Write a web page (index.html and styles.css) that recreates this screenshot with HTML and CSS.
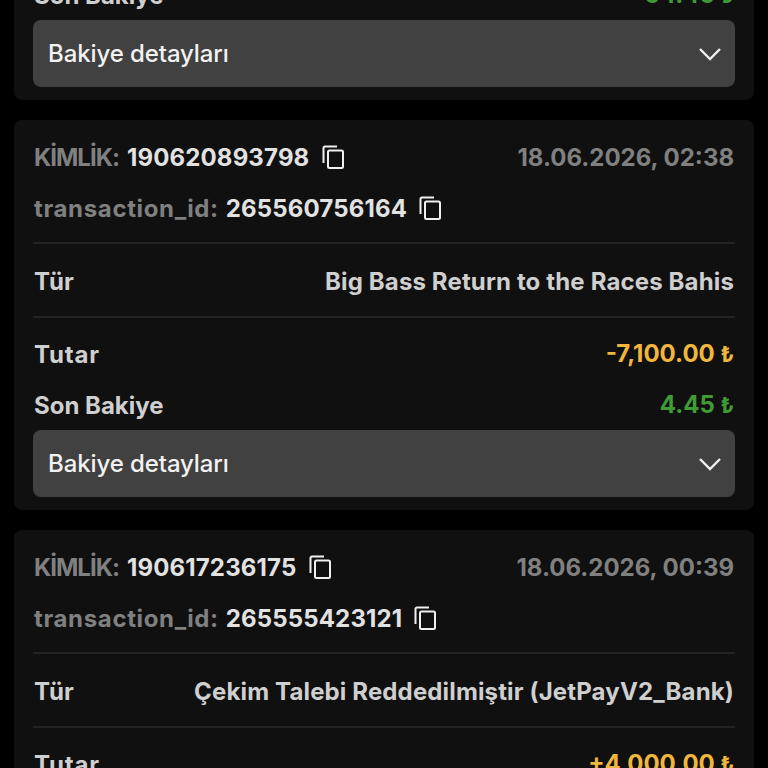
FILE: index.html
```html
<!DOCTYPE html>
<html lang="tr">
<head>
<meta charset="utf-8">
<title>İşlemler</title>
<link rel="stylesheet" href="styles.css">
</head>
<body>
<main class="list">
  <section class="card card-first">
    <div class="row balance"><span class="label">Son Bakiye</span><span class="green">54.45 <span class="cur">₺</span></span></div>
    <div class="select"><span>Bakiye detayları</span><svg class="chev" viewBox="0 0 24 14"><path d="M2 2l10 10L22 2"/></svg></div>
  </section>
  <section class="card">
    <div class="head"><div class="id"><span class="muted kimlik">KİMLİK:</span><b>190620893798</b><svg class="copy" viewBox="0 0 22 24"><path d="M15 1.5H3A1.5 1.5 0 0 0 1.5 3v15"/><rect x="6" y="5.5" width="15" height="17.5" rx="1.5"/></svg></div><span class="muted">18.06.2026, 02:38</span></div>
    <div class="id id2"><span class="muted txid">transaction_id:</span><b>265560756164</b><svg class="copy" viewBox="0 0 22 24"><path d="M15 1.5H3A1.5 1.5 0 0 0 1.5 3v15"/><rect x="6" y="5.5" width="15" height="17.5" rx="1.5"/></svg></div>
    <div class="row type"><span class="label wide">Tür</span><span class="label wide">Big Bass Return to the Races Bahis</span></div>
    <div class="row amount"><span class="label tutar">Tutar</span><span class="yellow">-7,100.00 <span class="cur">₺</span></span></div>
    <div class="row balance"><span class="label">Son Bakiye</span><span class="green">4.45 <span class="cur">₺</span></span></div>
    <div class="select"><span>Bakiye detayları</span><svg class="chev" viewBox="0 0 24 14"><path d="M2 2l10 10L22 2"/></svg></div>
  </section>
  <section class="card">
    <div class="head"><div class="id"><span class="muted kimlik">KİMLİK:</span><b>190617236175</b><svg class="copy" viewBox="0 0 22 24"><path d="M15 1.5H3A1.5 1.5 0 0 0 1.5 3v15"/><rect x="6" y="5.5" width="15" height="17.5" rx="1.5"/></svg></div><span class="muted">18.06.2026, 00:39</span></div>
    <div class="id id2"><span class="muted txid">transaction_id:</span><b>265555423121</b><svg class="copy" viewBox="0 0 22 24"><path d="M15 1.5H3A1.5 1.5 0 0 0 1.5 3v15"/><rect x="6" y="5.5" width="15" height="17.5" rx="1.5"/></svg></div>
    <div class="row type"><span class="label wide">Tür</span><span class="label wide">Çekim Talebi Reddedilmiştir (JetPayV2_Bank)</span></div>
    <div class="row amount"><span class="label tutar">Tutar</span><span class="yellow">+4,000.00 <span class="cur">₺</span></span></div>
  </section>
</main>
</body>
</html>
```
FILE: styles.css
```css
html, body {
  margin: 0;
  height: 768px;
  overflow: hidden;
  background: #000;
}
body {
  font-family: Inter, "Noto Sans", sans-serif;
  font-weight: 700;
  font-size: 24px;
  line-height: 30px;
  color: #d8d8d8;
}
.list {
  display: flex;
  flex-direction: column;
  gap: 20px;
  margin: -20px 14px 0;
}
.card {
  background: #101010;
  border-radius: 8px;
  padding: 23px 19px 13px;
}
.card-first { padding-top: 0; }
.head, .row, .id, .select {
  display: flex;
  align-items: center;
}
.head, .row, .select { justify-content: space-between; }
.head { padding: 0 1px; }
.id { gap: 8px; white-space: nowrap; }
.id2 { gap: 7px; margin-top: 21px; padding: 0 0 18px 1px; border-bottom: 2px solid #222; }
.muted { color: #808080; }
.kimlik { letter-spacing: -1px; }
.txid { letter-spacing: 0.65px; }
.tutar { letter-spacing: 0.8px; }
.wide { letter-spacing: 0.14px; }
b { color: #e2e2e2; font-weight: 700; letter-spacing: 0.15px; }
.copy {
  width: 22px;
  height: 24px;
  margin: 0 0 2px 5px;
  fill: none;
  stroke: #f0f0f0;
  stroke-width: 2;
}
.row { padding: 0 1px; }
.label { color: #cfcfcf; }
.type { height: 69px; padding-top: 3px; border-bottom: 2px solid #222; }
.amount { margin-top: 21px; }
.balance { margin-top: 20px; }
.card-first .balance { margin-top: 0; }
.yellow { color: #f0b73c; }
.green { color: #3f9c35; }
.cur { font-size: 21px; }
.select {
  margin-top: 9px;
  height: 67px;
  padding: 0 13px 0 15px;
  background: #414141;
  border-radius: 8px;
  color: #f2f2f2;
  font-weight: 500;
  letter-spacing: -0.1px;
}
.chev {
  width: 24px;
  height: 14px;
  fill: none;
  stroke: #f0f0f0;
  stroke-width: 2.4;
}
```
